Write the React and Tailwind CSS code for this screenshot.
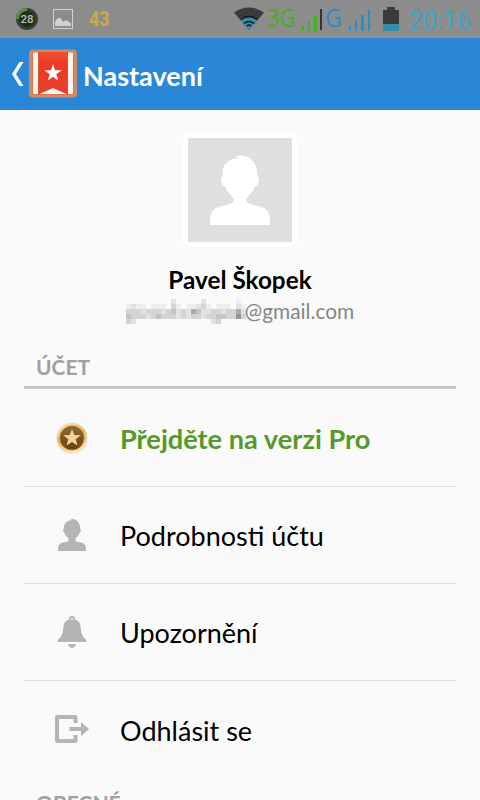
import React from 'react';

// shade of each 5px cell in the censored part of the address
const mosaic = [
  '000000000200000200000010',
  '121101110310112310111021',
  '333233323423254223323352',
  '433323433323233233443363',
  '320000000000000002300000',
];
const shades = ['#fafafa', '#eeeeee', '#e2e2e2', '#d4d4d4', '#c4c4c4', '#aaaaaa', '#929292'];

const Mosaic = () => (
  <svg width="120" height="25" viewBox="0 0 24 5" preserveAspectRatio="none" shapeRendering="crispEdges">
    {mosaic.map((row, y) =>
      row.split('').map((c, x) => (
        <rect key={`${x}-${y}`} x={x} y={y} width="1" height="1" fill={shades[c]} />
      ))
    )}
  </svg>
);

const StarIcon = () => (
  <svg width="34" height="34" viewBox="0 0 34 34">
    <defs>
      <linearGradient id="rim" x1="0" y1="0" x2="0.4" y2="1">
        <stop offset="0" stopColor="#fdeebb" />
        <stop offset="0.55" stopColor="#e6b563" />
        <stop offset="1" stopColor="#fbe3a0" />
      </linearGradient>
      <linearGradient id="coin" x1="0" y1="0" x2="0" y2="1">
        <stop offset="0" stopColor="#8b6a3a" />
        <stop offset="1" stopColor="#6b3f0c" />
      </linearGradient>
    </defs>
    <circle cx="17" cy="17.5" r="16" fill="#ececec" />
    <circle cx="17" cy="17" r="15" fill="url(#rim)" />
    <circle cx="17" cy="17" r="12" fill="url(#coin)" stroke="#a8782f" />
    <path d="M17 8l2.3 6 6.500.3-5.100 4 1.800 6.300-5.500-3.600-5.500 3.600 1.800-6.300-5.100-4 6.500-.3z" fill="#f5d097" />
  </svg>
);

const PersonPhoto = () => (
  <svg width="60" height="70" viewBox="0 0 60 70">
    <path
      fill="#fff"
      d="M13 14Q16 4 28 3L25.500 1Q38 -1 44 7Q48 13 47 20Q50 22 48.500 27Q47.500 31 45.500 31Q43 37 37 43Q35.500 46 38 48Q42 50 48 51Q60 53 60 66V70H0V66Q0 53 12 51Q18 50 22 48Q24.500 46 23 43Q17 37 14.500 31Q12.500 31 11.500 27Q10 22 13 20Z"
    />
  </svg>
);

const UserIcon = () => (
  <svg width="28" height="33" viewBox="0 0 28 33">
    <path
      fill="#b4b4b4"
      d="M7 4.500Q9 1.500 13.500 1.200L12.500 .200Q18 -.5 20.500 3.500Q22.200 6 22 9.500Q23.500 10.500 22.300 13Q20.500 17 17.500 19.500Q16.800 21.500 18 22.300Q20 23 23 23.500Q28 24.500 28 29.500V32H0V29.500Q0 24.500 5 23.500Q8 23 10 22.300Q11.200 21.500 10.500 19.500Q7.500 17 5.700 13Q4.500 10.500 6 9.500Q5.500 7 7 4.500Z"
    />
  </svg>
);

const BellIcon = () => (
  <svg width="28" height="32" viewBox="0 0 28 32">
    <path
      fill="#b4b4b4"
      fillRule="evenodd"
      d="M14 0q3 0 3.300 3.700Q22 5 22.500 10L23 15q.5 5 5 8.500V26H0v-2.500Q4.500 20 5 15l.5-5Q6 5 10.700 3.700 11 0 14 0zm0 1.800q-1.500 0-1.500 1.700h3q0-1.700-1.500-1.700z"
    />
    <path fill="#b4b4b4" d="M10 28h8q-1 4-4 4t-4-4z" />
  </svg>
);

const LogoutIcon = () => (
  <svg className="mb-[2px]" width="34" height="28" viewBox="0 0 34 28">
    <path d="M20.500 8V2H2v24h18.500v-6" fill="none" stroke="#b4b4b4" strokeWidth="4" strokeLinejoin="round" />
    <path d="M14.500 12H26V7l8 7-8 7v-5H14.500z" fill="#b4b4b4" />
  </svg>
);

const items = [
  { label: 'Přejděte na verzi Pro', icon: StarIcon, pro: true },
  { label: 'Podrobnosti účtu', icon: UserIcon },
  { label: 'Upozornění', icon: BellIcon },
  { label: 'Odhlásit se', icon: LogoutIcon },
];

const StatusBar = () => (
  <div className="flex h-[38px] items-center bg-[#8c8c8c] font-['Roboto',sans-serif]">
    <svg className="ml-4 shrink-0" width="22" height="22" viewBox="0 0 22 22">
      <circle cx="11" cy="11" r="9.500" fill="#222b20" stroke="#34432d" strokeWidth="3" />
      <path d="M1.500 11A9.500 9.500 0 0 1 11 1.500" fill="none" stroke="#5a8d3c" strokeWidth="3" />
      <text x="11" y="15" textAnchor="middle" fontSize="11.500" fontWeight="500" fill="#b9c4ac">28</text>
    </svg>
    <svg className="ml-[15px] shrink-0" width="20" height="20" viewBox="0 0 20 20">
      <rect x=".5" y=".5" width="19" height="19" fill="none" stroke="#d2d2d2" />
      <path d="M2 17v-4q3-5 5-4t3 4q4-3 5-1t3 2v3z" fill="#d2d2d2" />
    </svg>
    <span className="ml-4 w-5 origin-left scale-x-[0.86] pt-px text-[21px] font-bold text-[#c9a84e]">43</span>
    <svg className="ml-[125px] shrink-0" width="30" height="24" viewBox="0 0 30 24">
      <path d="M0 5.500Q15-4.500 30 5.500L15 23z" fill="#3b3b3b" />
      <path d="M6.500 13Q15 7 23.500 13L15 23z" fill="#378bab" />
      <path d="M7 12.500q8-6 16 0M10 16.500q5-4 10 0M13 19q2-2 4 0" fill="none" stroke="#151515" strokeWidth="1.500" />
    </svg>
    <span className="ml-[3px] w-[30px] origin-left scale-x-[0.84] pb-[3px] font-['Open_Sans',sans-serif] text-[26px] font-medium text-[#43b11c]">
      3G
    </span>
    <svg className="mt-[2px] ml-[5px] shrink-0" width="18" height="22" viewBox="0 0 18 22" fill="#43b11c">
      <path d="M0 17h2v5H0zM6 12h2v10H6zM12 6h3v16h-3z" />
    </svg>
    <div className="h-[21px] w-[2px] shrink-0 bg-[#333333]" />
    <span className="ml-[3px] w-[19px] origin-left scale-x-[0.88] pb-[3px] font-['Open_Sans',sans-serif] text-[26px] font-medium text-[#258fcc]">
      G
    </span>
    <svg className="mt-[2px] ml-[5px] shrink-0" width="22" height="22" viewBox="0 0 22 22" fill="#258fcc">
      <path d="M0 17h2v5H0zM6 12h2v10H6zM12 6h3v16h-3zM19 1h2v21h-2z" />
    </svg>
    <svg className="ml-3 shrink-0" width="16" height="24" viewBox="0 0 16 24">
      <path d="M0 3h4V0h8v3h4v21H0z" fill="#3b3b3b" />
      <path d="M0 17h16v7H0z" fill="#378bab" />
    </svg>
    <span className="ml-[10px] pt-[3px] text-[25px] leading-7 text-[#38a4c7]">20:16</span>
  </div>
);

const AppLogo = () => (
  <svg width="50" height="50" viewBox="0 0 50 50">
    <defs>
      <linearGradient id="ribbon" x1="0" y1="0" x2="0" y2="1">
        <stop offset="0" stopColor="#f0502d" />
        <stop offset="0.3" stopColor="#ec3a26" />
        <stop offset="1" stopColor="#e8402d" />
      </linearGradient>
    </defs>
    <rect x="1" y="0.500" width="48" height="48" rx="4" fill="#cf8a6b" />
    <rect x="4" y="3" width="42" height="43" rx="2" fill="#e07447" />
    <rect x="5" y="3.500" width="40" height="41.500" rx="1" fill="#fdf3ed" />
    <path d="M10.500 3h29v42.500L25 39l-14.500 6.500z" fill="url(#ribbon)" />
    <path d="M10.500 3v42.500M39.500 3v42.500" stroke="#c95c3c" strokeWidth="1" />
    <path d="M25 15l2 6.300h6.700l-5.400 4 2.100 6.400-5.400-4-5.400 4 2.100-6.400-5.400-4H23z" fill="#fff" />
  </svg>
);

const Header = () => (
  <div className="flex h-[72px] items-center bg-[#2a87d8] pl-[11px]">
    <svg className="mb-px shrink-0" width="13" height="26" viewBox="0 0 13 26">
      <path d="M8.500 1H12.500L5 13l7.500 12H8.500L1 13z" fill="#fff" />
    </svg>
    <div className="ml-1">
      <AppLogo />
    </div>
    <h1 className="ml-[5px] pt-[3px] text-[27px] leading-8 font-bold text-white">Nastavení</h1>
  </div>
);

const App = () => (
  <div className="h-[800px] w-[480px] overflow-hidden bg-[#fafafa] font-['Lato',sans-serif] text-black">
    <StatusBar />
    <Header />

    <div className="flex flex-col items-center pt-[23px]">
      <div className="h-[114px] w-[114px] rounded-lg bg-white p-[5px]">
        <div className="flex h-[104px] justify-center bg-[#dfdfdf] pt-[17px]">
          <PersonPhoto />
        </div>
      </div>
      <h2 className="mt-[17px] text-[24.3px] leading-8 font-bold">Pavel Škopek</h2>
      <div className="flex h-[30px] items-center text-[20.900px] text-[#858585]">
        <Mosaic />
        <span className="-ml-px">@gmail.com</span>
      </div>
    </div>

    <div className="px-6">
      <div className="mt-[23px] h-[40px] border-b-[3px] border-[#c6c6c6] pl-3 text-[21px] leading-[35px] font-bold text-[#a0a0a0]">
        ÚČET
      </div>
      {items.map(({ label, icon: Icon, pro }, i) => (
        <div
          key={label}
          className={`flex items-center ${i === 0 ? 'h-[98px]' : 'h-[97px]'} ${i < items.length - 1 ? 'border-b border-[#dddddd]' : ''}`}
        >
          <div className="flex w-24 justify-center">
            <Icon />
          </div>
          <span className={`pt-[3px] ${pro ? 'text-[27.200px] font-bold text-[#559a29]' : 'text-[27px]'}`}>{label}</span>
        </div>
      ))}
      <div className="pt-[8px] pl-3 text-[21px] leading-[34px] font-bold text-[#a0a0a0]">OBECNÉ</div>
    </div>
  </div>
);

export default App;
